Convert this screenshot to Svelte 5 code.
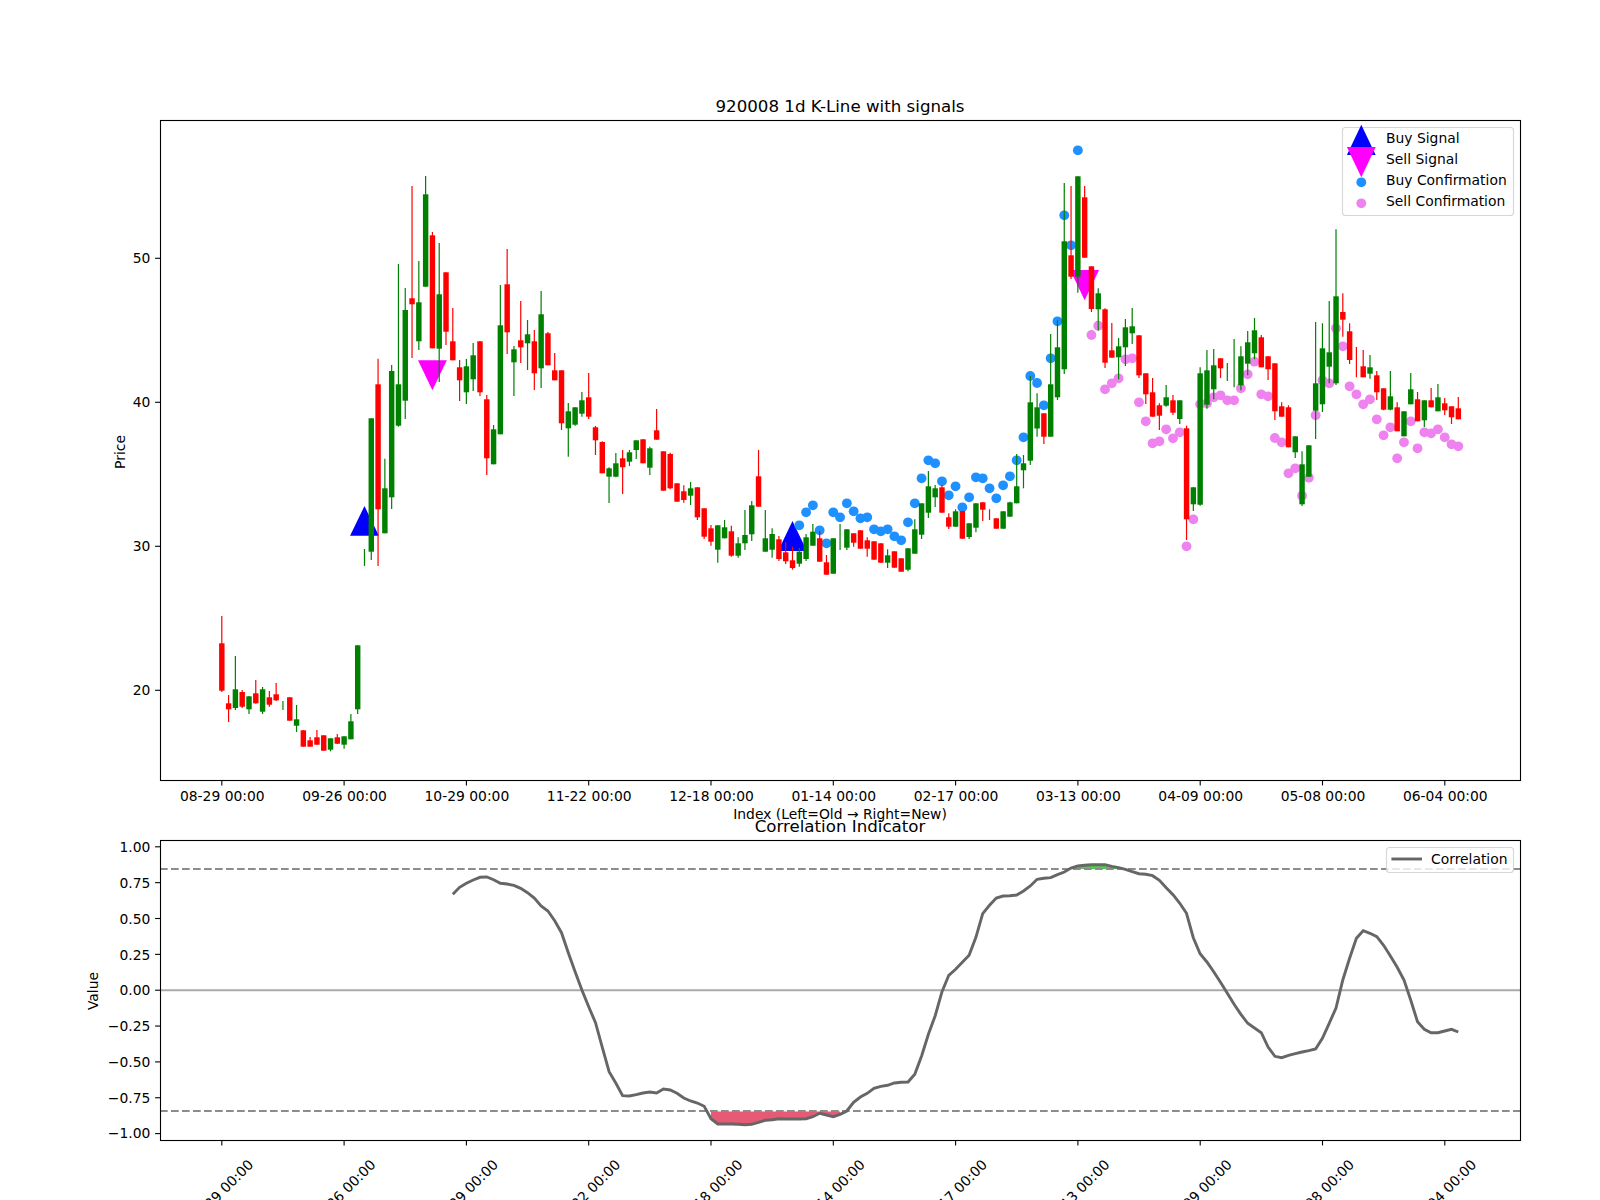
<script>
    // digitised chart: every y below is a page pixel, x comes from the bar index
    const barX = (i) => 221.8 + 6.794 * i;
    const priceTicks = [[50, 258.3], [40, 402.3], [30, 546.3], [20, 690.3]];
    const corrTicks = ['1.00', '0.75', '0.50', '0.25', '0.00', '−0.25', '−0.50', '−0.75', '−1.00'];
    const dates = ['08-29', '09-26', '10-29', '11-22', '12-18', '01-14', '02-17', '03-13', '04-09', '05-08', '06-04'];
    const tickX = dates.map((d, k) => ({ label: d + ' 00:00', x: 221.8 + 122.3 * k }));

    // colour, wick top, body top, body bottom, wick bottom (null body = wick only)
    const candles = [
        ['r',616,643.3,690.7,692],['r',695,703.3,709.3,722],['g',656,689.3,708,710],['r',690,692,706.7,708],
        ['g',696.3,696.3,709.3,714],['r',680,693.3,703.3,703.7],['g',687,689.3,711.7,714],['r',691,697.3,704.7,706.7],
        ['r',683,694.3,700.3,701],['g',701,null,null,710],['r',697.3,697.3,720.7,720.7],['g',705,719.3,725.7,732],
        ['r',730.3,730.3,746.7,746.7],['r',737,740.3,746.7,746.7],['r',730,737.3,744.7,744.7],['r',735.3,735.3,750.7,750.7],
        ['g',738.3,738.3,749.7,751.3],['r',734,737.3,743.7,744],['g',736.3,736.3,744.7,748.7],['g',714,721.3,739.3,739.3],
        ['g',645.3,645.3,709.3,714],['g',549,null,null,566],['g',418.3,418.3,551.7,560],['r',358.7,384.3,509.3,566],
        ['g',458.7,488.3,533.3,533.3],['g',365,371,497.3,509],['g',264,384.3,425.7,426.7],['g',288,310,400.7,419],
        ['r',186,298.3,304.3,358],['g',261,302.3,341.3,350],['g',176,194.3,286.7,286.7],['r',232,235.3,348.3,348.3],
        ['g',243,294.3,348.7,382],['r',272.3,272.3,331.7,345],['r',308,341.3,360.3,360.3],['r',360,367.3,380.3,401],
        ['g',359,366.3,392.3,404],['g',343,355.3,379.3,391],['r',341.3,341.3,392.3,396],['r',395,399.3,458.3,475],
        ['g',425,429.3,464.3,464.3],['g',285,325.3,434.3,434.3],['r',249,284.3,332.3,354],['g',346,349.3,362.3,396],
        ['r',301,340.3,347.3,363],['g',320,334.3,343.3,370],['r',330,341.3,373.3,390],['g',291,314.3,368.3,388],
        ['r',332,333.3,365.3,365.3],['r',353,370.3,380.3,380.3],['r',370.3,370.3,423.3,430],['g',403,411.3,428.3,456.7],
        ['g',407.3,407.3,424.7,425.7],['g',392,400.3,413.7,416.7],['r',373,397.3,416.7,419],['r',426,427.3,440.3,455],
        ['r',441.3,442,473.3,473.3],['g',467.3,468.3,476.7,503],['g',453,463.3,476.7,477.3],['r',450,458.3,467.3,494],
        ['g',450,452.3,461.7,466],['g',440.3,440.3,450,459],['r',439.3,439.3,463.3,463.3],['g',446.7,448.3,467.7,475],
        ['r',409,430.3,439.7,439.7],['r',451.3,451.3,490.7,490.7],['r',452.7,454,488.3,489.3],['r',483.3,483.3,501.7,501.7],
        ['r',485.3,491.3,500,502.7],['g',482,488.3,495.7,505],['r',487.3,487.3,517.3,520],['r',508.3,508.3,536.7,539],
        ['r',525,528.3,541.7,545.7],['g',525.3,525.3,549.7,562.7],['g',520,527.3,538.3,538.3],['r',525.7,531.3,555.7,556.7],
        ['g',537.3,543.3,555.7,557.7],['g',510,535,543.3,550],['g',501,505.3,534.3,541],['r',450,476.3,506.7,506.7],
        ['g',510,538.3,551.7,551.7],['g',528.3,534,549.7,557.7],['r',536,539.3,559,561],['r',542,552.3,561.3,564],
        ['r',546.7,560.3,568,569.7],['g',548,551.7,563.7,566.7],['g',534,537.3,559,561],['g',524,531.7,545.7,545.7],
        ['r',531,538.3,561.7,561.7],['r',555,562.3,574.7,574.7],['g',538.3,538.3,573.7,573.7],['g',524,null,null,550],
        ['g',529.3,529.3,547.7,550],['r',533.3,533.3,542.7,546.7],['r',530.3,530.3,548.7,548.7],['r',537.3,540.3,548.7,556.7],
        ['r',541.3,541.3,559.7,559.7],['r',543.3,543.3,562.7,562.7],['g',549.3,555.3,562.7,568],['r',551.3,551.3,567.7,567.7],
        ['r',558.3,558.3,571.7,571.7],['g',548.3,548.3,569.7,571.3],['g',519.3,529.3,553.7,553.7],['g',503.3,503.3,534.7,539],
        ['g',471,486.3,512.7,518],['g',485,488.3,497.3,507],['r',485,487.3,512.7,512.7],['r',513.3,517.3,526.7,529],
        ['g',509.3,511.3,526.7,526.7],['r',511,511,538.7,538.7],['g',523.3,523.3,537,539],['g',503.3,503.3,527.7,532.3],
        ['r',502.3,502.3,509.7,521],['r',509.3,null,null,520],['r',518.3,518.3,528.7,528.7],['g',511.3,511.3,528.7,528.7],
        ['g',501.7,502.3,516.7,516.7],['g',454,486.3,503.3,503.3],['g',455,463.3,470.3,488.3],['g',376,402.3,460.7,465],
        ['g',393.3,407.3,428.5,436.7],['r',413.3,413.3,436.7,444],['g',334,384.3,436.7,436.7],['g',320.3,347.3,397.3,400],
        ['g',183,241.3,369.3,374],['r',186,255.3,276.7,279],['g',176.3,176.3,276.7,292.7],['r',186,197.3,257.7,257.7],
        ['r',266.3,266.3,309,312],['g',288.3,293.3,309.3,330.7],['r',308.3,309.3,362.7,368],['r',323,350.3,357.7,357.7],
        ['g',338,346.3,357.3,379.3],['g',319,327.3,347.3,366],['g',308,326.3,333.3,344],['r',335.3,335.3,375.3,378],
        ['r',373.3,373.3,394.3,404],['r',378,392.3,416.7,416.7],['r',403.3,405.3,415.7,430],['g',385,397.3,405.7,406.7],
        ['r',395,400.3,412.7,415],['g',400.3,400.3,419,424],['r',425.7,428.3,519.3,540],['g',487.3,487.3,504.3,511],
        ['g',367.3,373.3,504.7,505.7],['g',350,370.3,404.7,408.7],['g',349,365.3,389.3,399.3],['r',358.3,358.3,368.3,378],
        ['g',363,null,null,381],['g',339,null,null,387.3],['g',346.3,356.3,385.3,390.3],['g',331,342.3,363.7,375.3],
        ['g',318,330.3,353.3,359.3],['r',335,337.3,367.3,367.3],['r',356.3,356.3,369.3,380],['r',363.3,363.3,411.3,420],
        ['r',402.3,406.3,416.7,416.7],['r',405.3,407.3,447.3,447.3],['g',436.3,436.3,452.3,458],['g',451.3,464.3,504.3,506],
        ['g',445.3,445.3,476.7,476.7],['g',322,383.3,410.7,439],['g',323.3,348.3,404.3,412],['g',301,352.3,366.7,383.3],
        ['g',229.3,296.3,383.3,385],['r',293.3,312,319.7,336.7],['r',323.3,331.3,360,364],['r',347,null,null,377.3],
        ['r',350,366.3,377.3,377.3],['g',355,367.3,373.7,378.7],['r',371,375.3,392.3,400],['r',388.3,388.3,409.7,410.3],
        ['g',371,396.3,409.7,410.3],['r',402.3,407.3,431.3,431.3],['g',411.3,411.3,436.3,436.3],['g',373,389.3,404.3,404.3],
        ['r',392,399.3,421.3,421.3],['g',400.3,400.3,420.3,427],['r',388,400.3,407.3,407.3],['g',384,397.3,411.3,411.3],
        ['r',398,403.3,410.3,415],['r',406.3,406.3,417.3,424],['r',397,408.3,419.3,419.3]
    ];
    const buyDots = [
        525.3,512.3,505.3,530.3,543.3,512.3,517.3,503.3,511.3,518.3,517.3,529.3,531.3,529.3,536.3,540.3,522.3,503.3,478.3,460.3,463.3,
        481.3,495.3,486.3,507.3,497.3,477.3,478.3,488.3,498.3,485.3,476.3,460.3,437.3,376,383,405.3,358.3,321.3,215.3,245.3,150.3
    ];
    const sellDots = [
        335,325.7,389.3,383.3,378.3,359.3,358.3,402.3,421.3,443.3,441.3,429.3,438.3,432.3,546.3,519.3,404.3,403.3,397.3,395.3,400.3,400.3,
        388.3,374.3,361.7,394.3,396.3,438,442.3,473.3,468.3,495.7,477.7,415.3,380.3,383.3,328.3,346.3,386.3,394.3,404.3,399.3,419.3,435.3,
        427.3,458.3,442.3,421.3,448.3,432.3,433.3,429.3,437.3,444.3,446.3
    ];
    const buyStart = 85;
    const sellStart = 128;

    // correlation, bars 34..182, in 1/3 px below y=850
    const corrStart = 34;
    const corr = [
        133,112,100,90,82,81,89,100,102,106,115,128,144,168,183,212,248,308,365,420,470,518,592,665,700,737,738,734,729,726,729,717,720,730,
        744,753,759,769,806,822,822,822,823,824,823,817,811,809,806,807,807,807,806,800,790,795,800,793,783,757,741,730,715,709,706,699,697,
        696,673,618,553,497,425,376,358,337,316,262,191,166,144,138,137,135,123,108,88,85,83,74,66,54,48,46,44,44,44,49,53,58,65,71,73,77,91,
        113,134,160,190,263,311,336,365,397,430,463,493,520,534,548,591,619,623,616,611,606,602,597,565,520,474,390,325,265,242,250,260,286,
        318,352,390,450,515,538,548,548,543,538,546
    ];
    const corrPt = (k) => `${barX(corrStart + k).toFixed(1)},${(850 + corr[k] / 3).toFixed(1)}`;
    const corrLine = corr.map((_, k) => corrPt(k)).join(' ');

    function fillBetween(from, to, edge) {
        const pts = [];
        for (let i = from; i <= to; i++) pts.push(corrPt(i - corrStart));
        pts.push(`${barX(to).toFixed(1)},${edge}`, `${barX(from).toFixed(1)},${edge}`);
        return pts.join(' ');
    }

    const triangle = (x, tip, base, half = 14.4) => `${x - half},${base} ${x + half},${base} ${x},${tip}`;
</script>

<svg class="figure" width="1600" height="1200" viewBox="0 0 1600 1200">
    <rect width="1600" height="1200" fill="#fff" />

    <!-- price chart -->
    <text class="title" x="840" y="111.5">920008 1d K-Line with signals</text>

    <polygon class="buy" points={triangle(barX(21), 506, 535.7)} />
    <polygon class="buy" points={triangle(barX(84), 521, 551)} />
    <polygon class="sell" points={triangle(barX(31), 390.3, 360.3)} />
    <polygon class="sell" points={triangle(barX(127), 300.3, 270)} />

    {#each buyDots as y, k}
        <circle class="buy-dot" cx={barX(buyStart + k)} cy={y} r="4.9" />
    {/each}
    {#each sellDots as y, k}
        <circle class="sell-dot" cx={barX(sellStart + k)} cy={y} r="4.9" />
    {/each}

    {#each candles as [c, hi, top, bottom, lo], i}
        <line class="wick {c}" x1={barX(i)} x2={barX(i)} y1={hi} y2={lo} />
        {#if top !== null}
            <rect class="body {c}" x={barX(i) - 2.7} y={top} width="5.44" height={bottom - top} />
        {/if}
    {/each}

    <rect class="spine" x="160.5" y="120.5" width="1360" height="660" />

    {#each priceTicks as [label, y]}
        <line class="tick" x1="155.1" x2="160" y1={y} y2={y} />
        <text class="label end" x="150.3" y={y + 5}>{label}</text>
    {/each}
    {#each tickX as t}
        <line class="tick" x1={t.x} x2={t.x} y1="781" y2="785.4" />
        <text class="label mid" x={t.x + 0.5} y="801">{t.label}</text>
    {/each}

    <text class="label mid" x="840" y="819">Index (Left=Old → Right=New)</text>
    <text class="label mid" transform="translate(125 452) rotate(-90)">Price</text>

    <g class="legend">
        <rect class="legend-box" x="1342.5" y="127.5" width="171" height="88" rx="3" />
        <polygon class="buy" points={triangle(1361.3, 124.7, 155)} />
        <polygon class="sell" points={triangle(1361.3, 177.3, 147)} />
        <circle class="buy-dot" cx="1361.3" cy="182.3" r="4.9" />
        <circle class="sell-dot" cx="1361.3" cy="203.3" r="4.9" />
        <text class="label" x="1386" y="143">Buy Signal</text>
        <text class="label" x="1386" y="164">Sell Signal</text>
        <text class="label" x="1386" y="185">Buy Confirmation</text>
        <text class="label" x="1386" y="206">Sell Confirmation</text>
    </g>

    <!-- correlation chart -->
    <text class="title" x="840" y="831.5">Correlation Indicator</text>

    <polygon class="fill-low" points={fillBetween(72, 91, 1111.5)} />
    <polygon class="fill-high" points={fillBetween(126, 132, 869)} />

    <line class="zero" x1="160" x2="1520" y1="990.2" y2="990.2" />
    <line class="limit" x1="160" x2="1520" y1="869" y2="869" />
    <line class="limit" x1="160" x2="1520" y1="1111" y2="1111" />
    <polyline class="corr" points={corrLine} />

    <rect class="spine" x="160.5" y="840.5" width="1360" height="300" />

    {#each corrTicks as label, k}
        <line class="tick" x1="155.1" x2="160" y1={846.8 + 35.85 * k} y2={846.8 + 35.85 * k} />
        <text class="label end" x="150.3" y={852.3 + 35.75 * k}>{label}</text>
    {/each}
    {#each tickX as t}
        <line class="tick" x1={t.x} x2={t.x} y1="1141" y2="1145.4" />
        <text class="label mid" transform="translate({t.x - 1} 1192) rotate(-45)" dy="5">{t.label}</text>
    {/each}

    <text class="label mid" transform="translate(98 991) rotate(-90)">Value</text>

    <g class="legend">
        <rect class="legend-box" x="1386.5" y="847.5" width="127" height="25" rx="3" />
        <line class="corr" x1="1391.4" x2="1422" y1="859" y2="859" />
        <text class="label" x="1431" y="864">Correlation</text>
    </g>
</svg>

<style>
    .figure {
        display: block;
        font-family: "DejaVu Sans", sans-serif;
    }

    .title {
        font-size: 16.67px;
        text-anchor: middle;
        fill: #000;
    }

    .label {
        font-size: 13.89px;
        fill: #000;
    }

    .mid {
        text-anchor: middle;
    }

    .end {
        text-anchor: end;
    }

    .spine {
        fill: none;
        stroke: #000;
        stroke-width: 1.1;
    }

    .tick {
        stroke: #000;
        stroke-width: 1.1;
    }

    .wick {
        stroke-width: 1.2;
    }

    .wick.g {
        stroke: #008000;
    }

    .wick.r {
        stroke: #ff0000;
    }

    .body.g {
        fill: #008000;
    }

    .body.r {
        fill: #ff0000;
    }

    .buy {
        fill: #0000ff;
    }

    .sell {
        fill: #ff00ff;
    }

    .buy-dot {
        fill: #1e90ff;
    }

    .sell-dot {
        fill: #ee82ee;
    }

    .legend-box {
        fill: #fff;
        fill-opacity: 0.8;
        stroke: #ccc;
        stroke-opacity: 0.8;
        stroke-width: 1.1;
    }

    .zero {
        stroke: #aaa;
        stroke-width: 2;
    }

    .limit {
        stroke: #8c8c8c;
        stroke-width: 2;
        stroke-dasharray: 7.7 3.3;
    }

    .corr {
        fill: none;
        stroke: #666;
        stroke-width: 2.9;
    }

    .fill-low {
        fill: #dc143c;
        fill-opacity: 0.7;
    }

    .fill-high {
        fill: #32cd32;
        fill-opacity: 0.9;
    }
</style>
